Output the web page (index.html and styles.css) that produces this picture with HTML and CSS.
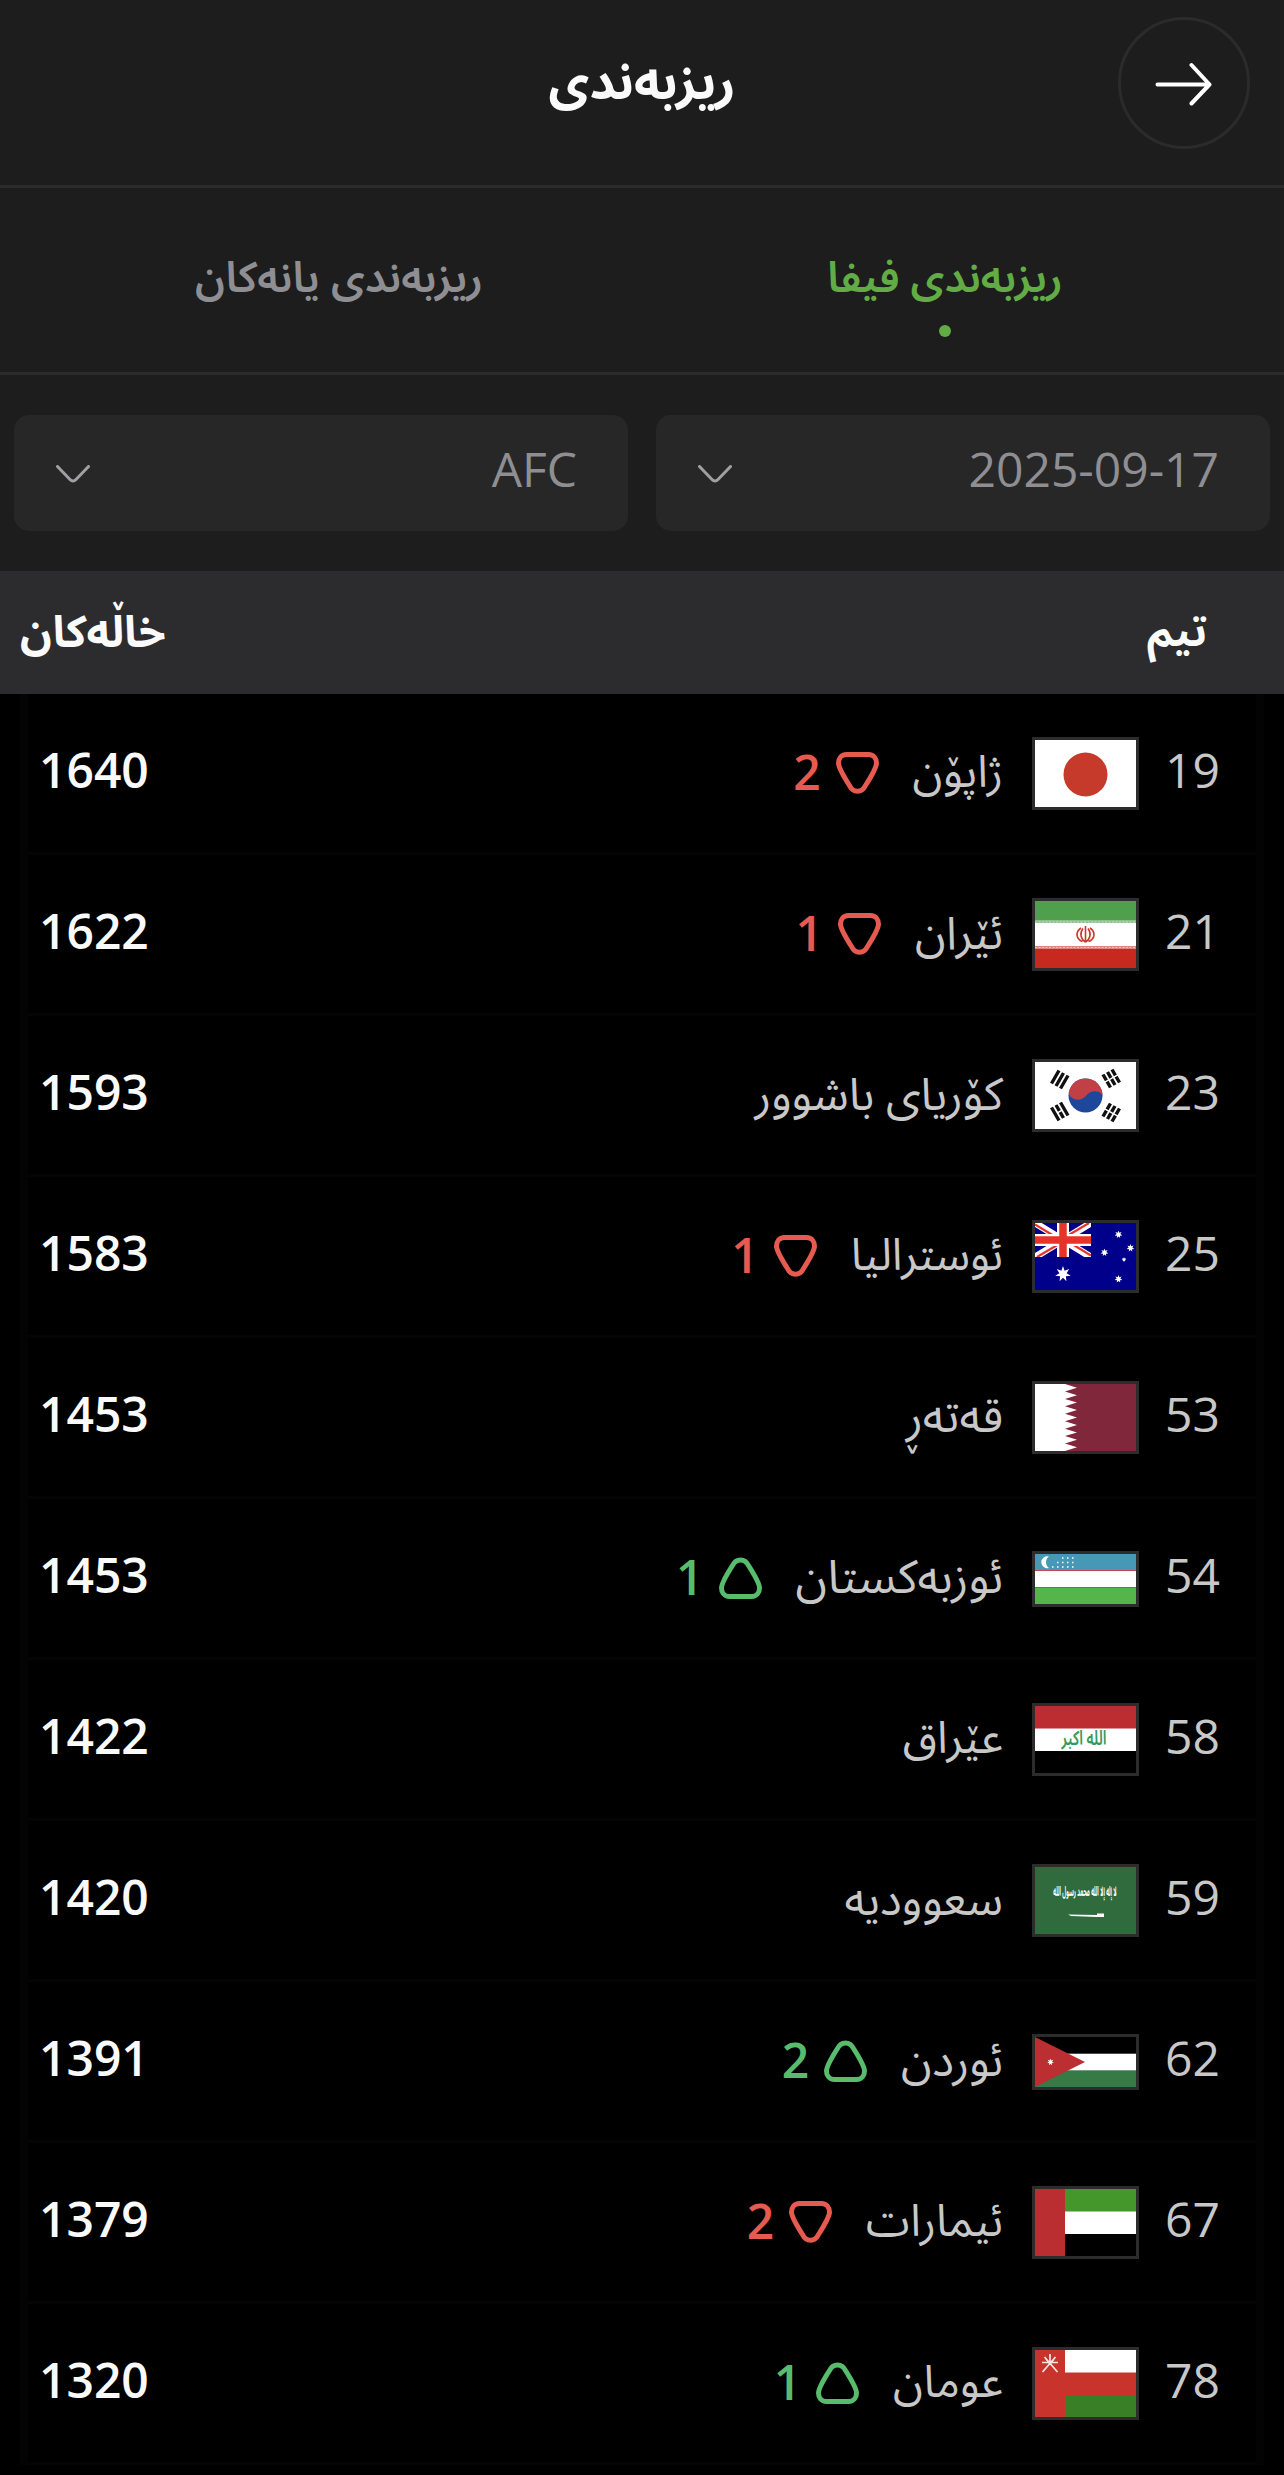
FILE: index.html
```html
<!DOCTYPE html>
<html lang="ckb" dir="rtl">
<head>
<meta charset="UTF-8">
<meta name="viewport" content="width=device-width,initial-scale=1.0">
<title>ریزبەندی</title>
<link rel="stylesheet" href="styles.css">
</head>
<body>

<svg class="defs" aria-hidden="true">
  <symbol id="down" viewBox="0 0 43 42"><path d="M10.500 2.500H32.500C38 2.500 40.500 7 40.500 11C40.500 15 33 28 29.500 33.500C26 41 17 41 13.500 33.500C10 28 2.500 15 2.500 11C2.500 7 5 2.500 10.500 2.500Z"/></symbol>
  <symbol id="up" viewBox="0 0 43 42"><path d="M10.500 39.500H32.500C38 39.500 40.500 35 40.500 31C40.500 27 33 14 29.500 8.500C26 1 17 1 13.500 8.500C10 14 2.500 27 2.500 31C2.500 35 5 39.500 10.500 39.500Z"/></symbol>
  <symbol id="star7" viewBox="-10 -10 20 20"><path d="M0-10 2-4.200 7.800-6.200 4.500-1 9.700 2.200 3.600 2.900 4.300 9 0 4.700-4.300 9-3.600 2.900-9.700 2.200-4.500-1-7.800-6.200-2-4.200Z"/></symbol>
</svg>

<!-- سەردێڕ -->
<header class="top">
  <h1>ریزبەندی</h1>
  <button class="back" aria-label="گەڕانەوە">
    <svg viewBox="0 0 58 44"><path d="M2.500 22.500H54.500M36.500 3 54.500 22.500 36.500 41.500"/></svg>
  </button>
</header>

<nav class="tabs">
  <a class="tab active">ریزبەندی فیفا</a>
  <a class="tab">ریزبەندی یانەکان</a>
</nav>

<div class="filters">
  <div class="select"><bdi>2025-09-17</bdi><svg viewBox="0 0 34 18"><path d="M1.500 1.500 14 14.500Q17 17.500 20 14.500L32.500 1.500"/></svg></div>
  <div class="select"><bdi>AFC</bdi><svg viewBox="0 0 34 18"><path d="M1.500 1.500 14 14.500Q17 17.500 20 14.500L32.500 1.500"/></svg></div>
</div>

<div class="table-head"><span class="h-team">تیم</span><span class="h-pts">خاڵەکان</span></div>

<!-- لیستی تیمەکان -->
<main class="list">
  <div class="row">
    <span class="rank">19</span>
    <svg class="flag" viewBox="0 0 101 67"><rect width="101" height="67" fill="#fff"/><circle cx="50.500" cy="34.500" r="22" fill="#c63a2b"/></svg>
    <span class="name">ژاپۆن</span>
    <span class="move lost"><svg><use href="#down"/></svg>2</span>
    <b class="points">1640</b>
  </div>

  <div class="row">
    <span class="rank">21</span>
    <svg class="flag" viewBox="0 0 101 67">
      <rect width="101" height="67" fill="#fff"/>
      <rect width="101" height="19" fill="#4f9f4d"/><rect y="48" width="101" height="19" fill="#c7291e"/>
      <path d="M0 20.500H101" stroke="#8fc18e" stroke-width="3"/>
      <path d="M0 46.500H101" stroke="#de8580" stroke-width="3"/>
      <path d="M0 21H101M0 46.500H101" stroke="#fff" stroke-opacity=".5" stroke-width="1" stroke-dasharray="2 1.500"/>
      <path d="M50.500 25V41.500M46 27C40 31 41 38 47.500 40.500M55 27C61 31 60 38 53.500 40.500M48 27.500C44.500 32 45.500 38 50.500 41M53 27.500C56.500 32 55.500 38 50.500 41" fill="none" stroke="#c7382e" stroke-width="1.600"/>
    </svg>
    <span class="name wide">ئێران</span>
    <span class="move lost"><svg><use href="#down"/></svg>1</span>
    <b class="points">1622</b>
  </div>

  <div class="row">
    <span class="rank">23</span>
    <svg class="flag" viewBox="0 0 101 67">
      <rect width="101" height="67" fill="#fff"/>
      <circle cx="50.500" cy="33.500" r="17" fill="#1d479b"/>
      <path d="M36.400 24A17 17 0 0 1 67.500 33.500C66 31 62 28 56 30C51 32 51 36 45 37.500C38 38.500 33 34 34 29Z" fill="#c04045"/>
      <g stroke="#111" stroke-width="3.400">
        <path d="M16.500 21.500 24 8.500M21 24 28.500 11M25.500 26.500 33 13.500"/>
        <path d="M68 12.500 75.500 25.500M72.500 10 80 23M77 7.500 84.500 20.500" stroke-dasharray="6.800 1.400"/>
        <path d="M16.500 45.500 24 58.500M25.500 40.500 33 53.500"/>
        <path d="M21 43 28.500 56" stroke-dasharray="6.800 1.400"/>
        <path d="M68 54.500 75.500 41.500M77 59.500 84.500 46.500" stroke-dasharray="6.800 1.400"/>
        <path d="M72.500 57 80 44" stroke-dasharray="6.800 1.400"/>
      </g>
    </svg>
    <span class="name wide">کۆریای باشوور</span>
    <b class="points">1593</b>
  </div>

  <div class="row">
    <span class="rank">25</span>
    <svg class="flag" viewBox="0 0 101 67">
      <rect width="101" height="67" fill="#00008b"/>
      <svg width="56" height="34" viewBox="0 0 56 34">
        <path d="M0 0 56 34M56 0 0 34" stroke="#fff" stroke-width="7"/>
        <path d="M0 1.500 24 16M56 32.500 32 18M54 0 32 13M2 34 24 21" stroke="#e8332a" stroke-width="2.200"/>
        <path d="M28 0V34M0 17H56" stroke="#fff" stroke-width="12"/>
        <path d="M28 0V34M0 17H56" stroke="#e8332a" stroke-width="7.500"/>
      </svg>
      <g fill="#fff">
        <use href="#star7" x="20" y="42" width="16" height="18"/>
        <use href="#star7" x="79.500" y="7.500" width="8" height="8"/>
        <use href="#star7" x="65.500" y="25.500" width="8" height="8"/>
        <use href="#star7" x="91.500" y="21" width="8" height="8"/>
        <use href="#star7" x="86.500" y="34" width="5" height="5"/>
        <use href="#star7" x="79.500" y="52" width="8" height="8"/>
      </g>
    </svg>
    <span class="name">ئوسترالیا</span>
    <span class="move lost"><svg><use href="#down"/></svg>1</span>
    <b class="points">1583</b>
  </div>

  <div class="row">
    <span class="rank">53</span>
    <svg class="flag" viewBox="0 0 101 67">
      <rect width="101" height="67" fill="#80273c"/>
      <path d="M0 0H30L42 3.700 30 7.400 42 11.200 30 14.900 42 18.600 30 22.300 42 26.100 30 29.800 42 33.500 30 37.200 42 40.900 30 44.700 42 48.400 30 52.100 42 55.800 30 59.600 42 63.300 30 67H0Z" fill="#fff"/>
    </svg>
    <span class="name wider">قەتەڕ</span>
    <b class="points">1453</b>
  </div>

  <div class="row">
    <span class="rank">54</span>
    <svg class="flag short" viewBox="0 0 101 50">
      <rect width="101" height="50" fill="#fff"/>
      <rect width="101" height="16" fill="#4698b6"/><rect y="34" width="101" height="16" fill="#55b54a"/>
      <path d="M0 16.500H101M0 33.500H101" stroke="#c64a50" stroke-width="1.200"/>
      <path d="M14 2.500A6 6 0 1 0 14 14A7 7 0 0 1 14 2.500" fill="#fff"/>
      <path d="M27 4H39M22 8.500H39M17 13H39" stroke="#fff" stroke-width="1.500" stroke-dasharray="1.500 3.500"/>
    </svg>
    <span class="name wider">ئوزبەکستان</span>
    <span class="move won"><svg><use href="#up"/></svg>1</span>
    <b class="points">1453</b>
  </div>

  <div class="row">
    <span class="rank">58</span>
    <svg class="flag" viewBox="0 0 101 67">
      <rect width="101" height="67" fill="#fff"/>
      <rect width="101" height="22.500" fill="#bb2d31"/><rect y="45" width="101" height="22" fill="#000"/>
      <text class="takbir" x="49" y="39" textLength="45" lengthAdjust="spacingAndGlyphs">الله اكبر</text>
    </svg>
    <span class="name">عێراق</span>
    <b class="points">1422</b>
  </div>

  <div class="row">
    <span class="rank">59</span>
    <svg class="flag" viewBox="0 0 101 67">
      <rect width="101" height="67" fill="#306b3d"/>
      <text class="shahada" transform="translate(50 29) scale(.4 1)">لا إله إلا الله محمد رسول الله</text>
      <path d="M33 47.500 62 48V46.500H69V50H62L36 49Z" fill="#fff"/>
    </svg>
    <span class="name wide">سعوودیە</span>
    <b class="points">1420</b>
  </div>

  <div class="row">
    <span class="rank">62</span>
    <svg class="flag short" viewBox="0 0 101 50">
      <rect width="101" height="50" fill="#fff"/>
      <rect width="101" height="16.700" fill="#000"/><rect y="33.300" width="101" height="16.700" fill="#367a45"/>
      <path d="M0 0 50 25 0 50Z" fill="#bb2e32"/>
      <use href="#star7" x="12" y="21.500" width="7" height="7" fill="#fff"/>
    </svg>
    <span class="name wide">ئوردن</span>
    <span class="move won"><svg><use href="#up"/></svg>2</span>
    <b class="points">1391</b>
  </div>

  <div class="row">
    <span class="rank">67</span>
    <svg class="flag" viewBox="0 0 101 67">
      <rect width="101" height="67" fill="#fff"/>
      <rect width="101" height="22.500" fill="#44972a"/><rect y="45" width="101" height="22" fill="#000"/>
      <rect width="30" height="67" fill="#ba2e31"/>
    </svg>
    <span class="name">ئیمارات</span>
    <span class="move lost"><svg><use href="#down"/></svg>2</span>
    <b class="points">1379</b>
  </div>

  <div class="row">
    <span class="rank">78</span>
    <svg class="flag" viewBox="0 0 101 67">
      <rect width="101" height="67" fill="#c8332c"/>
      <rect x="30" width="71" height="22.500" fill="#fff"/><rect x="30" y="45" width="71" height="22" fill="#387f25"/>
      <path d="M7.500 22 20.500 7M22.500 22 9.500 7M7 12.500H23M15 4V15M11 9 15 14 19 9" fill="none" stroke="#fbe4e2" stroke-width="1.700"/>
    </svg>
    <span class="name">عومان</span>
    <span class="move won"><svg><use href="#up"/></svg>1</span>
    <b class="points">1320</b>
  </div>
</main>
</body>
</html>
```
FILE: styles.css
```css
*{box-sizing:border-box;margin:0;padding:0}
body{
  width:1284px;height:2475px;
  overflow:hidden;
  background:#000;color:#fafafa;
  font-family:"Noto Sans","Noto Sans Arabic","DejaVu Sans",sans-serif;
  font-size:48px;line-height:1;
}
.defs{display:none}

/* ==== سەردێڕ ==== */
.top{
  display:grid;grid-template-columns:132px 1fr 132px;align-items:center;
  height:188px;padding:0 34px 19px;
  background:#1d1d1d;border-bottom:3px solid #2b2b2b;
}
h1{grid-column:2;grid-row:1;text-align:center;font-size:50px;font-weight:700;padding-bottom:6px}
.back{
  grid-column:1;grid-row:1;width:132px;height:132px;
  display:flex;align-items:center;justify-content:center;
  background:none;border:3px solid #2b2b2b;border-radius:50%;
}
.back svg{width:58px;height:44px;margin-top:2px;fill:none;stroke:#fff;stroke-width:4;stroke-linecap:round;stroke-linejoin:round}

/* ==== تابەکان ==== */
.tabs{
  display:flex;height:187px;padding:0 36px;
  background:#1d1d1d;border-bottom:3px solid #2b2b2b;
}
.tab{
  flex:1;display:flex;flex-direction:column;align-items:center;
  padding-top:66px;
  font-size:42.5px;line-height:44px;font-weight:600;color:#8e8e93;
}
.active{color:#62ac45}
.active::after{content:"";width:12px;height:12px;margin-top:27px;border-radius:50%;background:#62ac45}

/* ==== فلتەرەکان ==== */
.filters{display:flex;gap:28px;height:196px;padding:40px 14px;background:#1d1d1d}
.select{
  flex:1;height:116px;padding:0 51px 8px 42px;
  display:flex;align-items:center;justify-content:space-between;
  background:#272727;border-radius:15px;color:#8e8e93;
}
.select bdi,.rank{font-family:"Open Sans","Noto Sans",sans-serif;font-weight:400}
.select svg{width:34px;height:18px;margin-top:9px;fill:none;stroke:#a0a0a3;stroke-width:3;stroke-linecap:round}

.table-head{
  display:flex;justify-content:space-between;align-items:center;
  height:123px;padding:0 77px 5px 20px;
  background:#2c2c2e;font-size:44px;font-weight:700;
}
.h-team{font-size:42px}

/* ==== ڕیزەکان ==== */
.list{margin:0 20px;border:solid #030303;border-width:0 8px}
.row{
  display:flex;align-items:center;
  height:161px;padding:0 36px 0 11px;
  border-bottom:3px solid #040404;
}
.rank{width:81px;color:#c8c8c8;padding-bottom:6px}
.flag{width:107px;height:73px;margin-top:1px;border:3px solid #2c2c2c;flex:none}
.short{height:56px}
.name{margin-right:29px;padding-bottom:5px;color:#c8c8c8;font-size:44.4px}
.wide{font-size:45.5px}
.wider{font-size:46.7px}
.move{
  display:flex;align-items:center;gap:15px;height:48px;margin:0 34px 3px 0;
  font-family:"Open Sans","Noto Sans",sans-serif;font-weight:600;
}
.move svg{width:43px;height:42px;margin-top:3px;fill:none;stroke:currentColor;stroke-width:5}
.lost{color:#e65a50}
.won{color:#57bd6c}
.points{margin-right:auto;font-family:"Open Sans","Noto Sans",sans-serif;font-weight:550;padding-bottom:6px}
.takbir{font-size:20px;font-weight:600;fill:#359a5c;text-anchor:middle}
.shahada{font-size:13px;font-weight:700;fill:#fff;text-anchor:middle}
```
